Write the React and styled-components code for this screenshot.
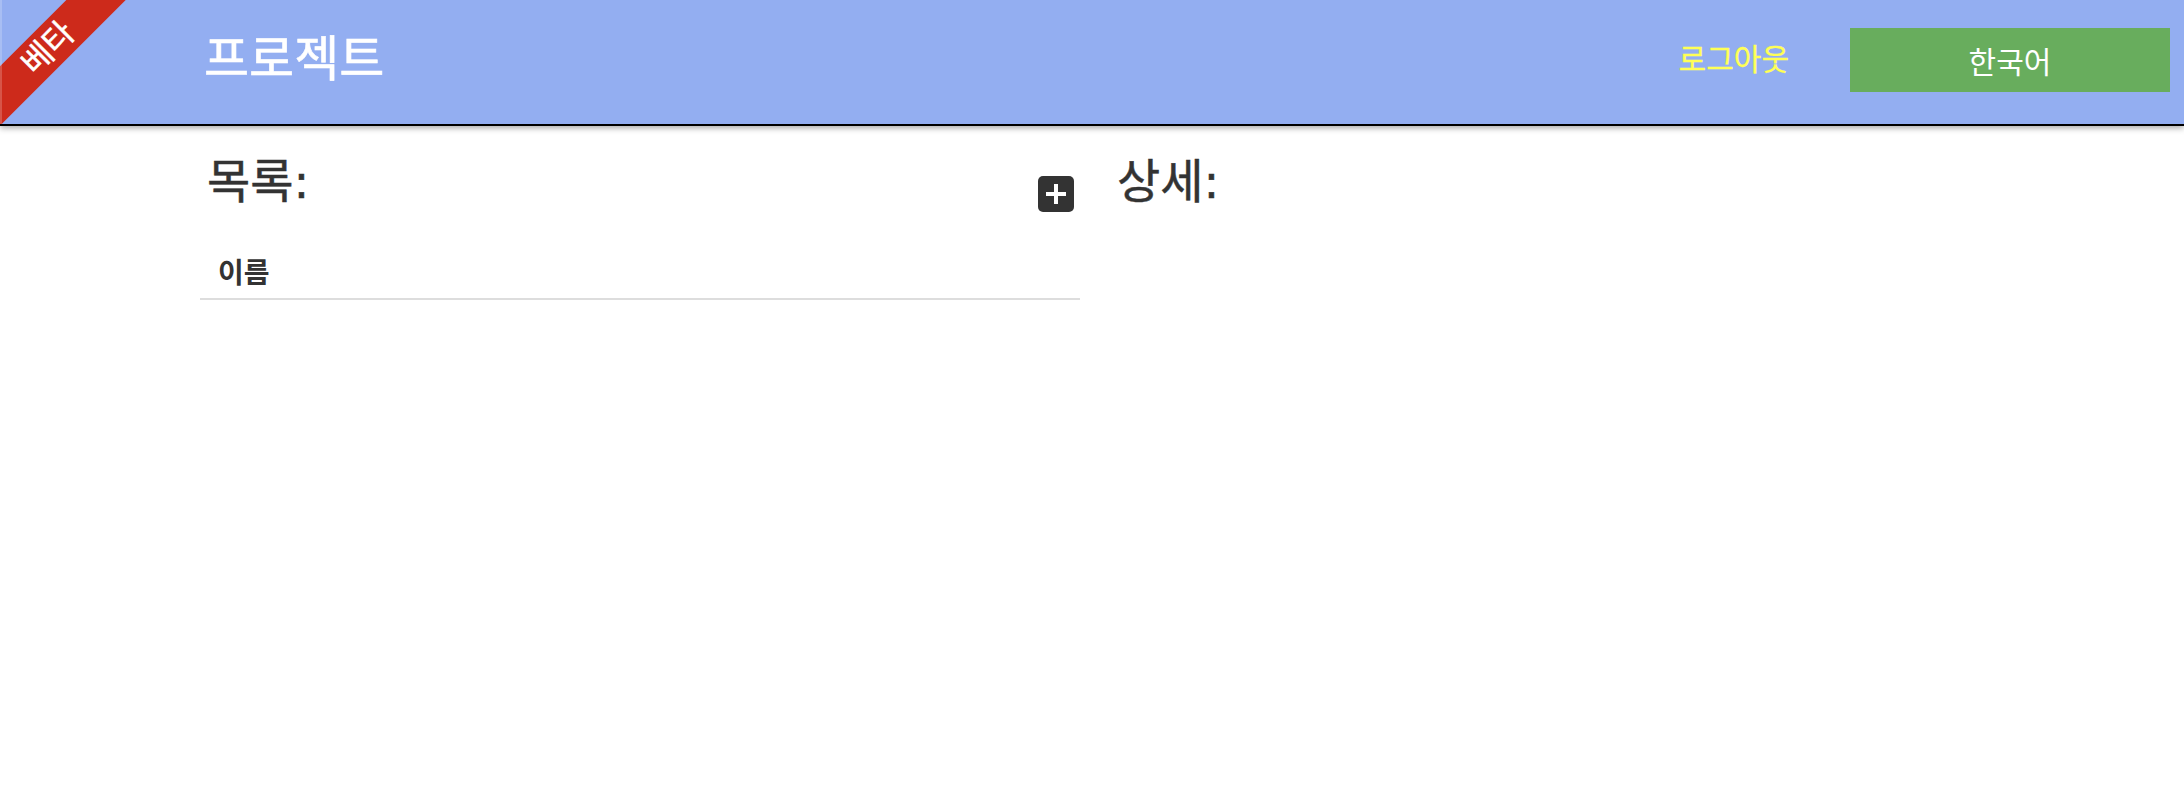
import React from 'react'
import styled, { createGlobalStyle } from 'styled-components'

const GlobalStyle = createGlobalStyle`
	html, body {
		margin: 0;
		padding: 0;
		background: #fff;
	}
	body {
		font-family: 'Liberation Sans', 'Noto Sans CJK KR', sans-serif;
		color: #333;
	}
`

const PlusIcon = () => (
	<svg width="36" height="36" viewBox="0 0 36 36">
		<rect width="36" height="36" rx="5" fill="#333" />
		<path d="M18 8v20M8 18h20" stroke="#fff" strokeWidth="4" fill="none" />
	</svg>
)

const App = () => (
	<>
		<GlobalStyle />
		<Header>
			<Ribbon>
				<span>베타</span>
			</Ribbon>
			<Title>프로젝트</Title>
			<HeaderActions>
				<LogoutLink>로그아웃</LogoutLink>
				<LanguageButton>한국어</LanguageButton>
			</HeaderActions>
		</Header>
		<Main>
			<ListColumn>
				<ListHeading>
					<Heading>목록:</Heading>
					<AddButton>
						<PlusIcon />
					</AddButton>
				</ListHeading>
				<Table>
					<thead>
						<tr>
							<th>이름</th>
						</tr>
					</thead>
				</Table>
			</ListColumn>
			<DetailColumn>
				<Heading>상세:</Heading>
			</DetailColumn>
		</Main>
	</>
)

export default App

const Header = styled.header`
	position: relative;
	box-sizing: border-box;
	height: 126px;
	padding: 0 14px 4px 204px;
	display: flex;
	align-items: center;
	justify-content: space-between;
	background: #93aef1;
	border-bottom: 2px solid #000;
	box-shadow: 0 2px 6px rgba(0, 0, 0, 0.35);
`
const Ribbon = styled.div`
	position: absolute;
	top: 0;
	left: 0;
	width: 126px;
	height: 124px;
	overflow: hidden;
	span {
		position: absolute;
		top: 27px;
		left: -52px;
		width: 200px;
		height: 42px;
		line-height: 42px;
		text-align: center;
		font-size: 32px;
		color: #fff;
		-webkit-text-stroke: 0.5px #fff;
		background: #cd2a1b;
		transform: rotate(-45deg);
	}
	&::after {
		content: '';
		position: absolute;
		top: 0;
		left: 0;
		width: 2px;
		height: 100%;
		background: rgba(255, 255, 255, 0.2);
	}
`
const Title = styled.h1`
	margin: 0 0 12px;
	font-size: 49px;
	font-weight: 400;
	color: #fff;
	-webkit-text-stroke: 0.6px #fff;
`
const HeaderActions = styled.div`
	display: flex;
	align-items: center;
	gap: 61px;
`
const LogoutLink = styled.a`
	margin-bottom: 6px;
	font-size: 30px;
	color: #ffff55;
	-webkit-text-stroke: 0.3px #ffff55;
`
const LanguageButton = styled.button`
	width: 320px;
	height: 64px;
	border: 0;
	padding: 0;
	font-family: inherit;
	font-size: 30px;
	color: #fff;
	background: #68ad5d;
`
const Main = styled.main`
	display: flex;
	padding: 0 0 0 200px;
`
const ListColumn = styled.section`
	width: 880px;
`
const DetailColumn = styled.section`
	margin-left: 37px;
`
const ListHeading = styled.div`
	display: flex;
	justify-content: space-between;
	align-items: flex-start;
	padding: 0 6px 0 7px;
`
const Heading = styled.h2`
	margin: 29px 0 0;
	font-family: 'DejaVu Sans', 'Noto Sans CJK KR', sans-serif;
	font-size: 47px;
	line-height: 53px;
	font-weight: 400;
	-webkit-text-stroke: 0.5px #333;
`
const AddButton = styled.button`
	margin-top: 50px;
	padding: 0;
	border: 0;
	height: 36px;
	background: none;
	cursor: pointer;
`
const Table = styled.table`
	width: 100%;
	margin-top: 34px;
	border-collapse: collapse;
	th {
		padding: 8px 18px 4px;
		font-size: 28px;
		line-height: 40px;
		text-align: left;
		border-bottom: 2px solid #ddd;
	}
`
